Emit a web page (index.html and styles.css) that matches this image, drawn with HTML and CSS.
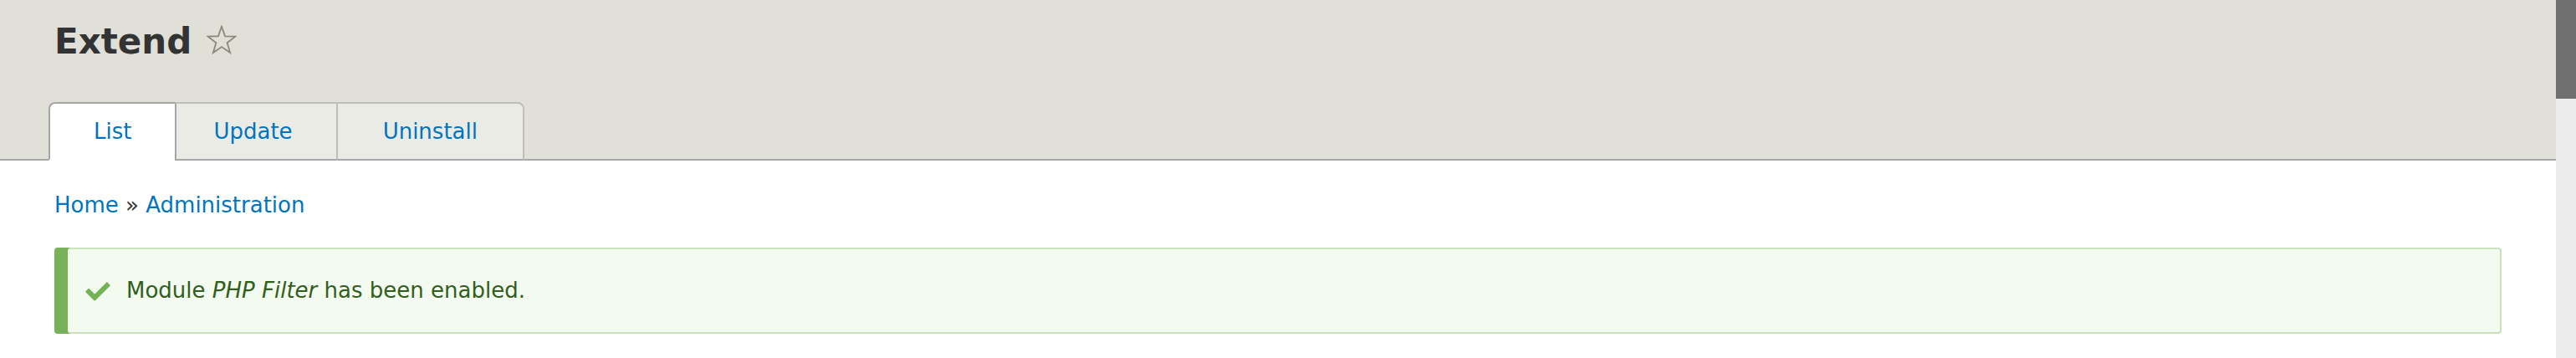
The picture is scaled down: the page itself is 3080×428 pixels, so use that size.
FILE: index.html
```html
<!DOCTYPE html>
<html lang="en">
<head>
<meta charset="utf-8">
<title>Extend</title>
<link rel="stylesheet" href="styles.css">
</head>
<body>
<div class="viewport">
  <div class="page">
    <header class="header">
      <div class="container">
        <h1 class="page-title">Extend<span class="star"><svg width="36" height="36" viewBox="0 0 36 36"><path d="M18 1.8 L22.1 13.3 L34.4 13.6 L24.6 21.2 L28.2 33 L18 26 L7.8 33 L11.4 21.2 L1.6 13.6 L13.9 13.3 Z" fill="none" stroke="#8b897a" stroke-width="1.8" stroke-linejoin="miter"/></svg></span></h1>
        <ul class="tabs">
          <li class="tab is-active"><a href="#">List</a></li>
          <li class="tab tab-update"><a href="#">Update</a></li>
          <li class="tab tab-uninstall"><a href="#">Uninstall</a></li>
        </ul>
      </div>
    </header>
    <main class="container content">
      <nav class="breadcrumb"><a href="#">Home</a> » <a href="#">Administration</a></nav>
      <div class="messages status">
        <svg class="check" width="32" height="32" viewBox="0 0 16 16"><path fill="#73b355" d="M6.464 13.676c-.194.194-.513.194-.707 0l-4.960-4.955c-.194-.193-.194-.513 0-.707l1.405-1.407c.194-.195.512-.195.707 0l2.849 2.848c.194.193.513.193.707 0l6.629-6.626c.195-.194.514-.194.707 0l1.404 1.404c.193.194.193.513 0 .707l-8.741 8.736z"/></svg>
        <div class="message-text">Module <em>PHP Filter</em> has been enabled.</div>
      </div>
    </main>
  </div>
  <div class="scrollbar"><div class="thumb"></div></div>
</div>
</body>
</html>
```

FILE: styles.css
```css
html, body {
  margin: 0;
  padding: 0;
  height: 428px;
  overflow: hidden;
  background: #fff;
}
body {
  font-family: "DejaVu Sans", sans-serif;
  font-size: 26px;
  line-height: 40px;
  color: #333;
}
a {
  color: #0074bd;
  text-decoration: none;
}
.viewport {
  display: flex;
  height: 428px;
}
.page {
  flex: 1;
  min-width: 0;
  overflow: hidden;
}
.scrollbar {
  width: 24px;
  flex: none;
  background: #ececec;
}
.thumb {
  height: 118px;
  background: #707070;
}
.container {
  padding: 0 65px;
}
.header {
  background: #e0e0d8;
  border-bottom: 2px solid #a6a6a6;
  padding-top: 24px;
}
.page-title {
  margin: 0 0 47px;
  font-size: 42px;
  line-height: 51px;
  font-weight: bold;
  color: #333;
}
.star {
  display: inline-block;
  margin-left: 18px;
  vertical-align: -2px;
  line-height: 0;
}
.tabs {
  display: flex;
  list-style: none;
  margin: 0 0 -2px -7px;
  padding: 0;
}
.tab {
  background: #ebebe6;
  border-top: 2px solid #bfbfba;
  border-left: 2px solid #bfbfba;
  border-bottom: 2px solid #a6a6a6;
}
.tab:first-child {
  border-top-left-radius: 8px;
}
.tab:last-child {
  border-right: 2px solid #bfbfba;
  border-top-right-radius: 8px;
}
.tab.is-active {
  background: #fff;
  border-top-color: #a6a6a6;
  border-left-color: #a6a6a6;
  border-bottom-color: #fff;
}
.tab.is-active + .tab {
  border-left-color: #a6a6a6;
}
.tab a {
  display: block;
  padding: 18px 52px;
  line-height: 30px;
}
.tab-update a {
  padding-left: 44px;
}
.tab-uninstall a {
  padding-left: 54px;
  padding-right: 54px;
}
.content {
  padding-top: 33px;
}
.breadcrumb {
  line-height: 40px;
  color: #333;
}
.messages {
  margin: 31px 0 0 16px;
  display: flex;
  align-items: flex-start;
  padding: 30px 40px 30px 20px;
  border: 2px solid #c9e1bd;
  border-left: 0;
  border-radius: 4px;
  background: #f3faef;
  color: #325e1c;
  box-shadow: -16px 0 0 #77b259;
  line-height: 39px;
}
.check {
  flex: none;
  margin: 4px 18px 0 0;
}
.message-text em {
  font-style: italic;
}
```
